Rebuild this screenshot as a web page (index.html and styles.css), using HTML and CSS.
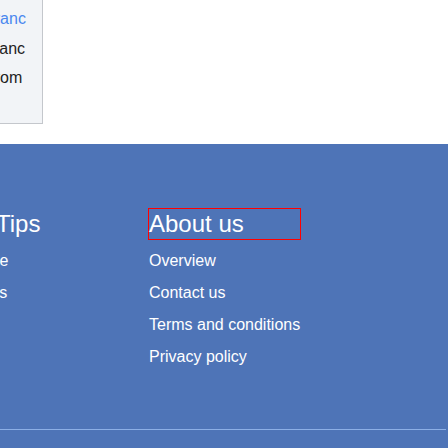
FILE: index.html
```html
<!DOCTYPE html>
<html>
<head>
<meta charset="utf-8">
<link rel="stylesheet" href="styles.css">
</head>
<body>
<div class="top">
  <div class="panel">
    <ul class="menu">
      <li class="active">Franc</li>
      <li>Blanc</li>
      <li>From</li>
    </ul>
  </div>
</div>
<footer class="footer">
  <div class="cols">
    <div class="col col-left">
      <h2 class="col-title">Helpful Tips</h2>
      <ul class="links">
        <li><a href="#">How to guide</a></li>
        <li><a href="#">Video guides</a></li>
      </ul>
    </div>
    <div class="col col-right">
      <h2 class="col-title outlined">About us</h2>
      <ul class="links">
        <li><a href="#">Overview</a></li>
        <li><a href="#">Contact us</a></li>
        <li><a href="#">Terms and conditions</a></li>
        <li><a href="#">Privacy policy</a></li>
      </ul>
    </div>
  </div>
  <div class="rule"></div>
</footer>
</body>
</html>
```
FILE: styles.css
```css
html, body {
  margin: 0;
  padding: 0;
  background: #ffffff;
  font-family: "Liberation Sans", Arial, sans-serif;
  overflow: hidden;
}

.top {
  height: 144px;
}

.panel {
  width: 42px;
  height: 123px;
  background: #f2f4f7;
  border-right: 1px solid #c4c7cc;
  border-bottom: 1px solid #c4c7cc;
  overflow: hidden;
}

.menu {
  list-style: none;
  margin: 0 0 0 -15px;
  padding: 4px 0 0 0;
  font-size: 16px;
  line-height: 29.5px;
  color: #222222;
  white-space: nowrap;
}

.menu .active {
  color: #4a88ef;
}

.footer {
  height: 304px;
  background: #4e74b7;
  padding-top: 64px;
  box-sizing: border-box;
  overflow: hidden;
}

.cols {
  display: flex;
}

.col-left {
  flex: none;
  width: 233px;
  margin-left: -85px;
}

.col-right {
  flex: none;
}

.col-title {
  margin: 0 0 5px 0;
  font-size: 24px;
  line-height: 30px;
  font-weight: normal;
  color: #ffffff;
  white-space: nowrap;
  border: 1px solid transparent;
}

.col-left .col-title {
  border-left-width: 0;
}

.outlined {
  width: 151px;
  border-color: #ff0000;
}

.links {
  list-style: none;
  margin: 0;
  padding: 0;
  font-size: 16px;
  line-height: 32px;
  white-space: nowrap;
}

.col-right .links {
  padding-left: 1px;
}

.links a {
  color: #ffffff;
  text-decoration: none;
}

.rule {
  margin-top: 56px;
  width: 446px;
  height: 1px;
  background: #8cafe6;
}
```
